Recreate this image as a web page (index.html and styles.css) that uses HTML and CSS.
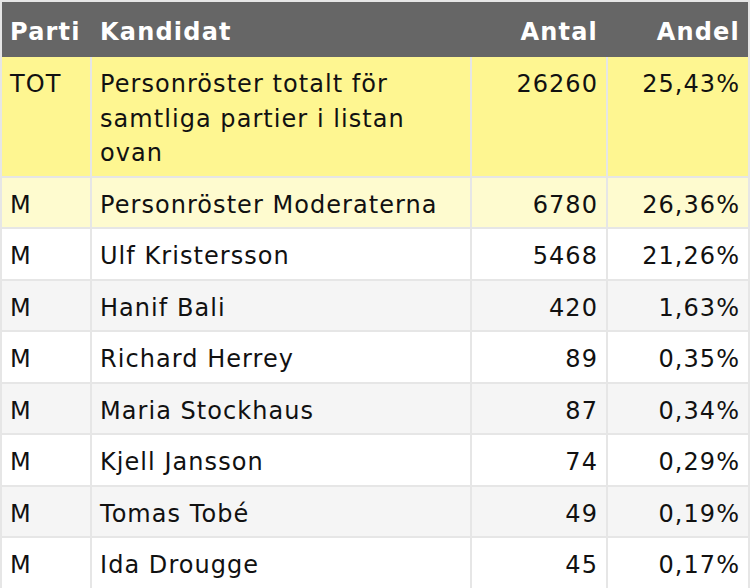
FILE: index.html
```html
<!DOCTYPE html>
<html lang="sv">
<head>
<meta charset="utf-8">
<title>Personröster</title>
<link rel="stylesheet" href="styles.css">
</head>
<body>
<table class="votes">
  <thead>
    <tr>
      <th class="c-parti">Parti</th>
      <th class="c-kand">Kandidat</th>
      <th class="c-antal num">Antal</th>
      <th class="c-andel num">Andel</th>
    </tr>
  </thead>
  <tbody>
    <tr class="row-total">
      <td>TOT</td>
      <td>Personröster totalt för samtliga partier i listan ovan</td>
      <td class="num">26260</td>
      <td class="num">25,43%</td>
    </tr>
    <tr class="row-party">
      <td>M</td>
      <td>Personröster Moderaterna</td>
      <td class="num">6780</td>
      <td class="num">26,36%</td>
    </tr>
    <tr>
      <td>M</td>
      <td>Ulf Kristersson</td>
      <td class="num">5468</td>
      <td class="num">21,26%</td>
    </tr>
    <tr class="alt">
      <td>M</td>
      <td>Hanif Bali</td>
      <td class="num">420</td>
      <td class="num">1,63%</td>
    </tr>
    <tr>
      <td>M</td>
      <td>Richard Herrey</td>
      <td class="num">89</td>
      <td class="num">0,35%</td>
    </tr>
    <tr class="alt">
      <td>M</td>
      <td>Maria Stockhaus</td>
      <td class="num">87</td>
      <td class="num">0,34%</td>
    </tr>
    <tr>
      <td>M</td>
      <td>Kjell Jansson</td>
      <td class="num">74</td>
      <td class="num">0,29%</td>
    </tr>
    <tr class="alt">
      <td>M</td>
      <td>Tomas Tobé</td>
      <td class="num">49</td>
      <td class="num">0,19%</td>
    </tr>
    <tr>
      <td>M</td>
      <td>Ida Drougge</td>
      <td class="num">45</td>
      <td class="num">0,17%</td>
    </tr>
  </tbody>
</table>
</body>
</html>
```
FILE: styles.css
```css
html, body {
  margin: 0;
  padding: 0;
  background: #ffffff;
}

.votes {
  width: 750px;
  table-layout: fixed;
  border-collapse: separate;
  border-spacing: 0;
  border: 2px solid #e6e6e6;
  border-bottom: 0;
  font-family: "DejaVu Sans", Verdana, sans-serif;
  font-size: 24px;
  letter-spacing: 1.05px;
  color: #111111;
}

.votes th,
.votes td {
  box-sizing: border-box;
  padding: 0 8px 0 8px;
  text-align: left;
  vertical-align: top;
}

.votes th {
  background: #666666;
  color: #ffffff;
  font-weight: bold;
  letter-spacing: 1.2px;
  height: 55px;
  line-height: 34px;
  padding-top: 13px;
  padding-bottom: 8px;
}

.votes th + th {
  border-left: 2px solid #666666;
}

.votes td {
  line-height: 34.5px;
  padding-top: 10px;
  padding-bottom: 5px;
  border-bottom: 2px solid #e6e6e6;
}

.votes td + td {
  border-left: 2px solid #e6e6e6;
}

.c-parti { width: 88px; }
.c-kand { width: 380px; }
.c-antal { width: 136px; }
.c-andel { width: 142px; }

.votes .num {
  text-align: right;
}

.row-total td {
  background: #fef691;
}

.row-party td {
  background: #fefbcf;
}

.alt td {
  background: #f5f5f5;
}
```
